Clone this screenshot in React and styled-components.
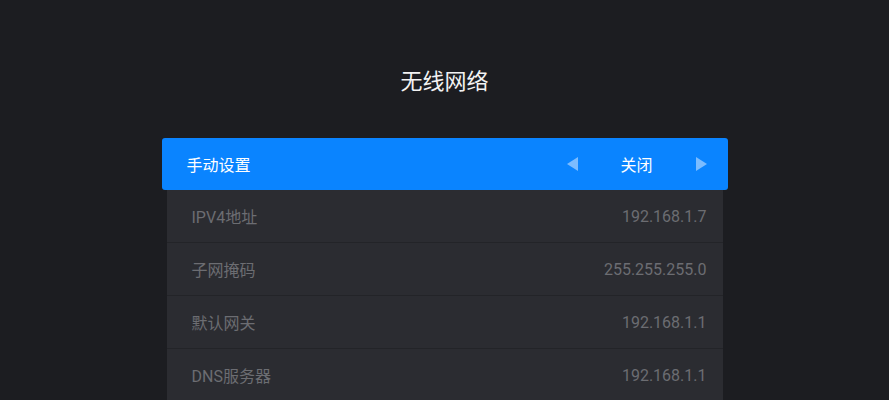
import styled, { createGlobalStyle } from "styled-components";

const GlobalStyle = createGlobalStyle`
  html, body {
    margin: 0;
    padding: 0;
    background: #1c1d21;
    font-family: Roboto, "Noto Sans CJK SC", sans-serif;
  }
`;

const Page = styled.div`
  width: 889px;
  height: 400px;
  overflow: hidden;
  background: #1c1d21;
  display: flex;
  flex-direction: column;
  align-items: center;
`;

const Title = styled.h1`
  margin: 67px 0 0;
  height: 30px;
  line-height: 30px;
  font-size: 22px;
  font-weight: 400;
  color: #f2f2f2;
`;

const Panel = styled.div`
  width: 566px;
  margin-top: 41px;
  display: flex;
  flex-direction: column;
`;

const Header = styled.div`
  height: 52px;
  background: #0a84ff;
  border-radius: 3px;
  display: flex;
  align-items: center;
  justify-content: space-between;
  padding: 0 21px 0 25px;
  color: #fff;
  font-size: 16px;
`;

const Selector = styled.div`
  display: flex;
  align-items: center;
`;

const Arrow = styled.span`
  width: 0;
  height: 0;
  border-top: 7px solid transparent;
  border-bottom: 7px solid transparent;
  ${(p) =>
    p.dir === "left"
      ? "border-right: 11px solid #7cbcff;"
      : "border-left: 11px solid #7cbcff;"}
`;

const SelectorValue = styled.span`
  width: 118px;
  text-align: center;
`;

const List = styled.div`
  margin: 0 5px;
  display: flex;
  flex-direction: column;
`;

const Row = styled.div`
  height: 52px;
  background: #2b2c31;
  border-bottom: 1px solid #232428;
  display: flex;
  align-items: center;
  justify-content: space-between;
  padding: 0 16px 0 25px;
  font-size: 16px;
  color: #6c6d72;
`;

const rows = [
  ["IPV4地址", "192.168.1.7"],
  ["子网掩码", "255.255.255.0"],
  ["默认网关", "192.168.1.1"],
  ["DNS服务器", "192.168.1.1"],
];

export default function App() {
  return (
    <>
      <GlobalStyle />
      <Page>
        <Title>无线网络</Title>
        <Panel>
          <Header>
            <span>手动设置</span>
            <Selector>
              <Arrow dir="left" />
              <SelectorValue>关闭</SelectorValue>
              <Arrow dir="right" />
            </Selector>
          </Header>
          <List>
            {rows.map(([label, value]) => (
              <Row key={label}>
                <span>{label}</span>
                <span>{value}</span>
              </Row>
            ))}
          </List>
        </Panel>
      </Page>
    </>
  );
}
